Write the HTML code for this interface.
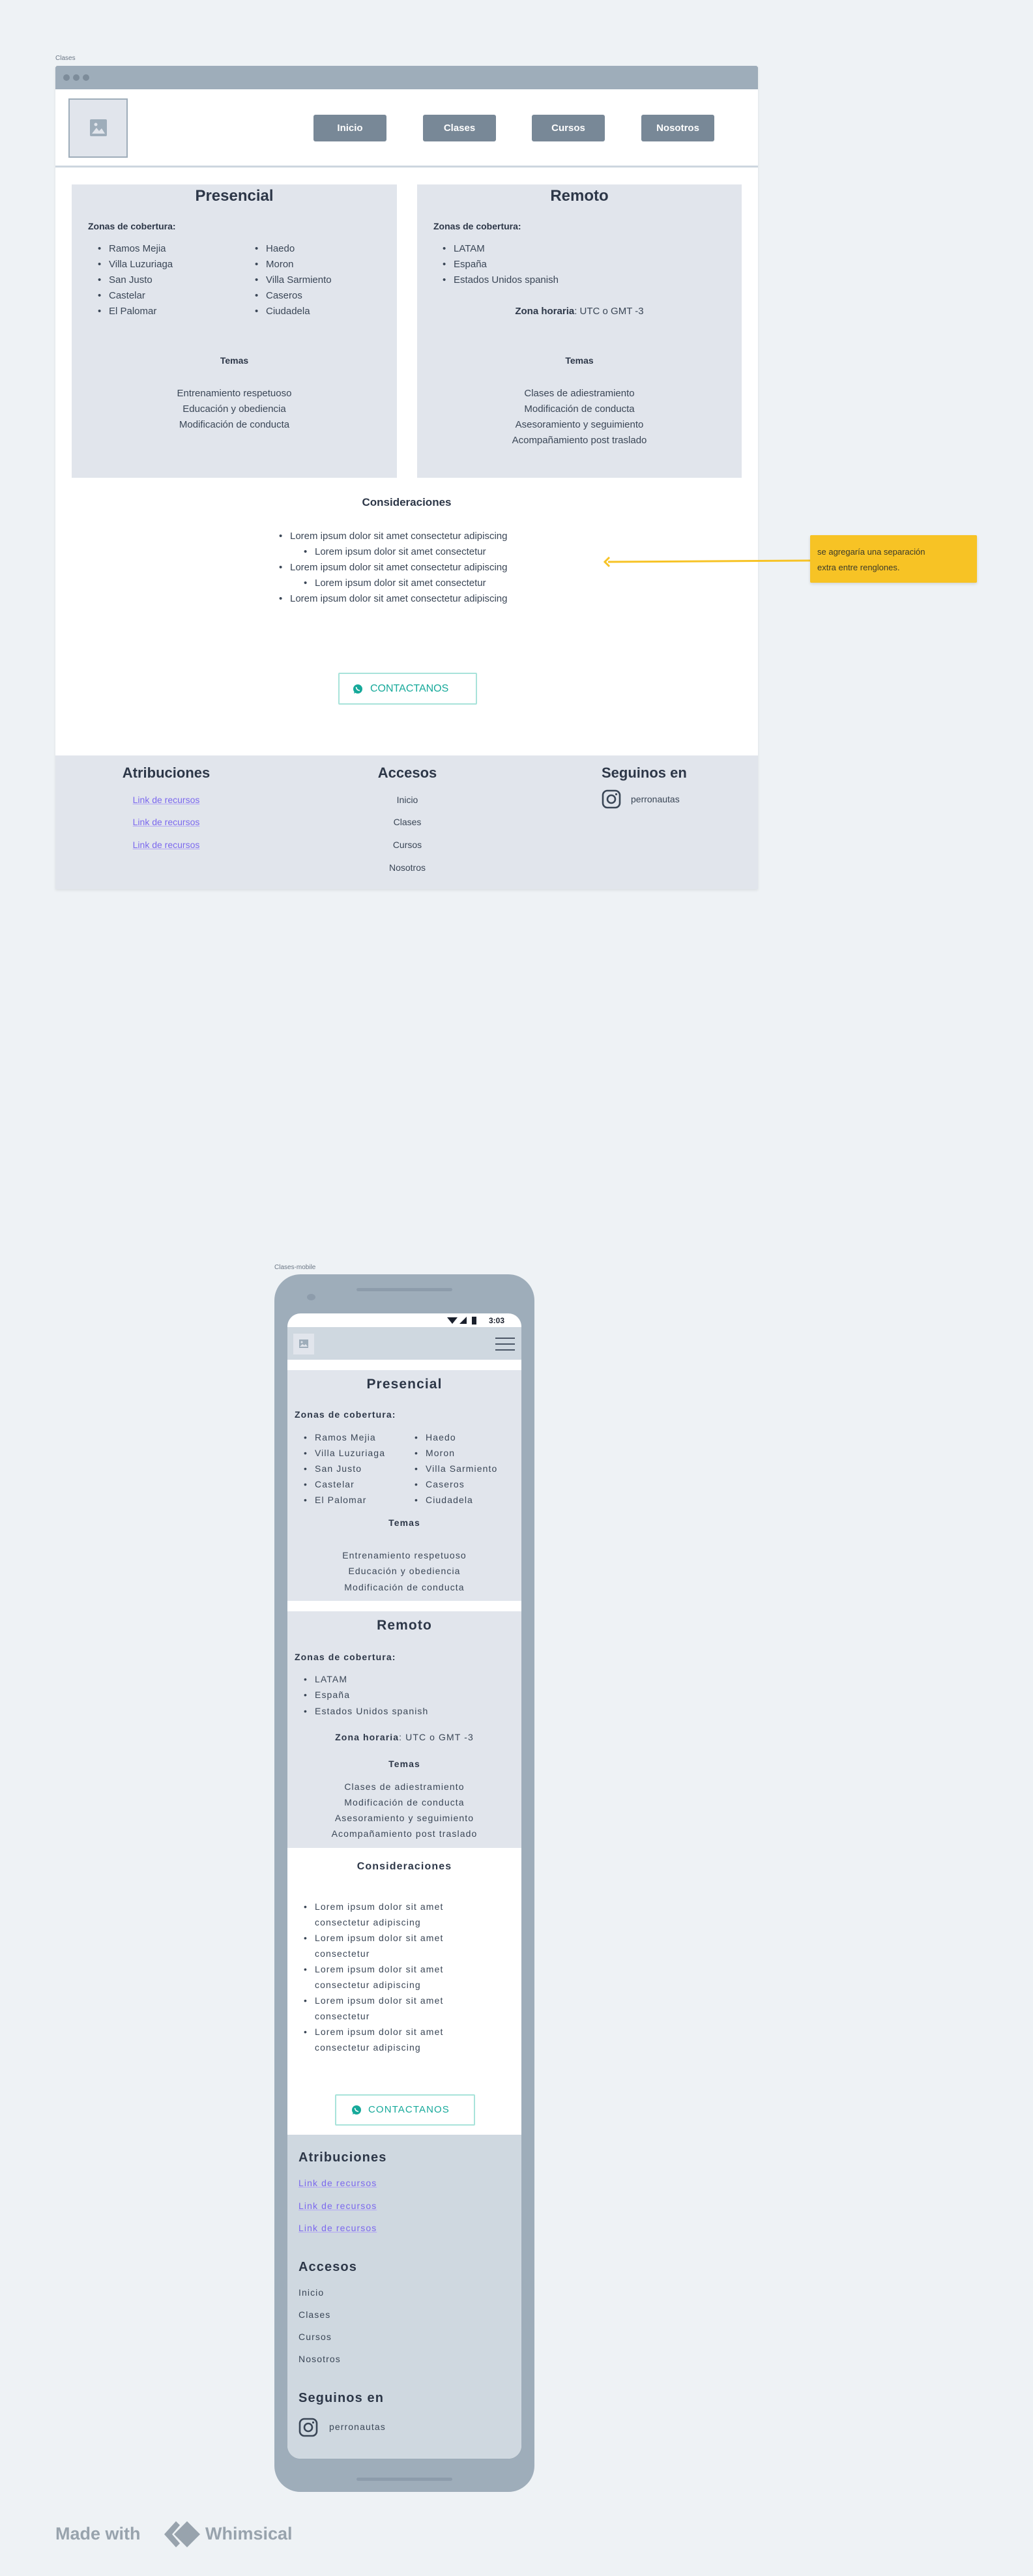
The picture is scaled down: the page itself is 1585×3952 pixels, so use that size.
<!DOCTYPE html>
<html><head><meta charset="utf-8">
<style>
*{margin:0;padding:0;box-sizing:border-box}
body{width:1585px;height:3952px;background:#eef2f5;position:relative;overflow:hidden;font-family:"Liberation Sans",sans-serif;color:#2d3748}
.a{position:absolute}
.t{position:absolute;line-height:24px;white-space:nowrap;font-size:15px;color:#3a4656}
.m{letter-spacing:1.1px}
.c{text-align:center}
.b{font-weight:bold;color:#2d3748}
.btn{position:absolute;background:#788897;color:#fff;font-weight:bold;font-size:15px;text-align:center;line-height:41px;border-radius:3px;width:112px;height:41px;top:176px}
.dot{position:absolute;width:10px;height:10px;border-radius:50%;background:#7d8c9a;top:114px}
.link{color:#7b68ee;text-decoration:underline;text-decoration-color:#b3a7f5}
.bul::before{content:"•";position:absolute;margin-left:-17px}
</style></head><body>

<!-- DESKTOP -->
<div class="t" style="left:85px;top:84px;font-size:10px;line-height:12px;color:#6b7785">Clases</div>
<div class="a" style="left:85px;top:101px;width:1078px;height:1263px;background:#fff;box-shadow:0 2px 4px rgba(0,0,0,.08)"></div>
<div class="a" style="left:85px;top:101px;width:1078px;height:36px;background:#9eadba;border-radius:3px 3px 0 0"></div>
<div class="dot" style="left:97px"></div><div class="dot" style="left:112px"></div><div class="dot" style="left:127px"></div>
<div class="a" style="left:85px;top:254px;width:1078px;height:3px;background:#cdd6df"></div>
<div class="a" style="left:105px;top:151px;width:91px;height:91px;background:#e1e5ec;border:2px solid #9eadba"></div>
<svg class="a" style="left:138px;top:183px" width="26" height="26" viewBox="0 0 26 26"><rect width="26" height="26" rx="2" fill="#9eadba"/><circle cx="9" cy="8" r="2.5" fill="#e1e5ec"/><path d="M3 22 L10 13 L14 18 L18 14 L23 22Z" fill="#e1e5ec"/></svg>
<div class="btn" style="left:481px">Inicio</div>
<div class="btn" style="left:649px">Clases</div>
<div class="btn" style="left:816px">Cursos</div>
<div class="btn" style="left:984px">Nosotros</div>

<div class="a" style="left:110px;top:283px;width:499px;height:450px;background:#e1e5ec"></div>
<div class="a" style="left:640px;top:283px;width:498px;height:450px;background:#e1e5ec"></div>

<div class="t c b" style="left:110px;width:499px;top:286px;font-size:24px;line-height:30px">Presencial</div>
<div class="t b" style="left:135px;top:335px;font-size:14px">Zonas de cobertura:</div>
<div class="t bul" style="left:167px;top:370px">Ramos Mejia</div>
<div class="t bul" style="left:167px;top:394px">Villa Luzuriaga</div>
<div class="t bul" style="left:167px;top:418px">San Justo</div>
<div class="t bul" style="left:167px;top:442px">Castelar</div>
<div class="t bul" style="left:167px;top:466px">El Palomar</div>
<div class="t bul" style="left:408px;top:370px">Haedo</div>
<div class="t bul" style="left:408px;top:394px">Moron</div>
<div class="t bul" style="left:408px;top:418px">Villa Sarmiento</div>
<div class="t bul" style="left:408px;top:442px">Caseros</div>
<div class="t bul" style="left:408px;top:466px">Ciudadela</div>
<div class="t c b" style="left:110px;width:499px;top:541px;font-size:14px">Temas</div>
<div class="t c" style="left:110px;width:499px;top:592px">Entrenamiento respetuoso</div>
<div class="t c" style="left:110px;width:499px;top:616px">Educación y obediencia</div>
<div class="t c" style="left:110px;width:499px;top:640px">Modificación de conducta</div>

<div class="t c b" style="left:640px;width:498px;top:286px;font-size:24px;line-height:30px">Remoto</div>
<div class="t b" style="left:665px;top:335px;font-size:14px">Zonas de cobertura:</div>
<div class="t bul" style="left:696px;top:370px">LATAM</div>
<div class="t bul" style="left:696px;top:394px">España</div>
<div class="t bul" style="left:696px;top:418px">Estados Unidos spanish</div>
<div class="t c" style="left:640px;width:498px;top:466px"><b style="color:#2d3748">Zona horaria</b>: UTC o GMT -3</div>
<div class="t c b" style="left:640px;width:498px;top:541px;font-size:14px">Temas</div>
<div class="t c" style="left:640px;width:498px;top:592px">Clases de adiestramiento</div>
<div class="t c" style="left:640px;width:498px;top:616px">Modificación de conducta</div>
<div class="t c" style="left:640px;width:498px;top:640px">Asesoramiento y seguimiento</div>
<div class="t c" style="left:640px;width:498px;top:664px">Acompañamiento post traslado</div>

<div class="t c b" style="left:85px;width:1078px;top:759px;font-size:17px">Consideraciones</div>
<div class="t bul" style="left:445px;top:811px">Lorem ipsum dolor sit amet consectetur adipiscing</div>
<div class="t bul" style="left:483px;top:835px">Lorem ipsum dolor sit amet consectetur</div>
<div class="t bul" style="left:445px;top:859px">Lorem ipsum dolor sit amet consectetur adipiscing</div>
<div class="t bul" style="left:483px;top:883px">Lorem ipsum dolor sit amet consectetur</div>
<div class="t bul" style="left:445px;top:907px">Lorem ipsum dolor sit amet consectetur adipiscing</div>

<svg class="a" style="left:925px;top:850px" width="320" height="24"><line x1="8" y1="12" x2="318" y2="10" stroke="#f7c325" stroke-width="3"/><path d="M10 5 L3 12 L10 19" fill="none" stroke="#f7c325" stroke-width="3"/></svg>
<div class="a" style="left:1243px;top:821px;width:256px;height:73px;background:#f7c325;border-radius:2px;box-shadow:0 2px 4px rgba(0,0,0,.12)"></div>
<div class="t" style="left:1254px;top:835px;font-size:13px;color:#3a3a2a">se agregaría una separación</div>
<div class="t" style="left:1254px;top:859px;font-size:13px;color:#3a3a2a">extra entre renglones.</div>

<div class="a" style="left:519px;top:1032px;width:213px;height:49px;border:2px solid #a8e3da;border-radius:2px"></div>
<svg class="a" style="left:541px;top:1049px" width="16" height="16" viewBox="0 0 16 16"><circle cx="8" cy="8" r="7" fill="#16a99a"/><path d="M2 15 L3 11 L6 13Z" fill="#16a99a"/><path d="M5.5 5 Q6 10 11 10.5" stroke="#fff" stroke-width="1.6" fill="none"/></svg>
<div class="t" style="left:568px;top:1045px;color:#16a99a;font-size:16px">CONTACTANOS</div>

<div class="a" style="left:85px;top:1159px;width:1078px;height:205px;background:#e1e5ec"></div>
<div class="t c b" style="left:130px;width:250px;top:1172px;font-size:22px;line-height:28px">Atribuciones</div>
<div class="t c b" style="left:500px;width:250px;top:1172px;font-size:22px;line-height:28px">Accesos</div>
<div class="t b" style="left:923px;top:1172px;font-size:22px;line-height:28px">Seguinos en</div>
<div class="t c link" style="left:130px;width:250px;top:1215px;font-size:14px">Link de recursos</div>
<div class="t c link" style="left:130px;width:250px;top:1249px;font-size:14px">Link de recursos</div>
<div class="t c link" style="left:130px;width:250px;top:1284px;font-size:14px">Link de recursos</div>
<div class="t c" style="left:500px;width:250px;top:1215px;font-size:14px">Inicio</div>
<div class="t c" style="left:500px;width:250px;top:1249px;font-size:14px">Clases</div>
<div class="t c" style="left:500px;width:250px;top:1284px;font-size:14px">Cursos</div>
<div class="t c" style="left:500px;width:250px;top:1319px;font-size:14px">Nosotros</div>
<svg class="a" style="left:923px;top:1211px" width="30" height="30" viewBox="0 0 30 30"><rect x="2" y="2" width="26" height="26" rx="7" fill="none" stroke="#3a4656" stroke-width="2.6"/><circle cx="15" cy="15" r="6" fill="none" stroke="#3a4656" stroke-width="2.6"/><circle cx="22.5" cy="7.5" r="1.6" fill="#3a4656"/></svg>
<div class="t" style="left:968px;top:1214px;font-size:14px">perronautas</div>

<!-- MOBILE -->
<div class="t" style="left:421px;top:1938px;font-size:10px;line-height:14px;color:#6b7785">Clases-mobile</div>
<div class="a" style="left:421px;top:1955px;width:399px;height:1868px;background:#9eadba;border-radius:40px"></div>
<div class="a" style="left:547px;top:1976px;width:147px;height:5px;background:#8d9cab;border-radius:3px"></div>
<div class="a" style="left:471px;top:1985px;width:13px;height:10px;background:#8d9cab;border-radius:50%"></div>
<div class="a" style="left:547px;top:3801px;width:147px;height:5px;background:#8d9cab;border-radius:3px"></div>
<div class="a" style="left:441px;top:2015px;width:359px;height:1757px;background:#fff;border-radius:20px 20px 20px 20px;overflow:hidden">
  <div class="a" style="left:0;top:21px;width:359px;height:50px;background:#cfd8e0"></div>
  <div class="a" style="left:0;top:87px;width:359px;height:354px;background:#e1e5ec"></div>
  <div class="a" style="left:0;top:457px;width:359px;height:363px;background:#e1e5ec"></div>
  <div class="a" style="left:0;top:1260px;width:359px;height:497px;background:#cfd8e0"></div>
</div>
<svg class="a" style="left:685px;top:2019px" width="60" height="14"><path d="M1 2 L17 2 L9 12Z" fill="#1a202c"/><path d="M20 12 L31 1 L31 12Z" fill="#1a202c"/><rect x="39" y="1" width="7" height="12" fill="#1a202c"/></svg>
<div class="t b" style="left:750px;top:2014px;font-size:12px;color:#1a202c">3:03</div>
<div class="a" style="left:450px;top:2046px;width:32px;height:32px;background:#e1e5ec"></div>
<svg class="a" style="left:459px;top:2055px" width="14" height="13"><rect width="14" height="13" fill="#9eadba"/><circle cx="4" cy="4" r="1.5" fill="#e1e5ec"/><path d="M1 11 L5 7 L8 9 L10 7 L13 11Z" fill="#e1e5ec"/></svg>
<div class="a" style="left:760px;top:2052px;width:30px;height:2px;background:#4a5565"></div>
<div class="a" style="left:760px;top:2061px;width:30px;height:2px;background:#4a5565"></div>
<div class="a" style="left:760px;top:2070px;width:30px;height:2px;background:#4a5565"></div>

<div class="t c b m" style="left:441px;width:359px;top:2110px;font-size:21px;line-height:28px">Presencial</div>
<div class="t b m" style="left:452px;top:2158px;font-size:14px">Zonas de cobertura:</div>
<div class="t bul m" style="left:483px;top:2193px;font-size:14px">Ramos Mejia</div>
<div class="t bul m" style="left:483px;top:2217px;font-size:14px">Villa Luzuriaga</div>
<div class="t bul m" style="left:483px;top:2241px;font-size:14px">San Justo</div>
<div class="t bul m" style="left:483px;top:2265px;font-size:14px">Castelar</div>
<div class="t bul m" style="left:483px;top:2289px;font-size:14px">El Palomar</div>
<div class="t bul m" style="left:653px;top:2193px;font-size:14px">Haedo</div>
<div class="t bul m" style="left:653px;top:2217px;font-size:14px">Moron</div>
<div class="t bul m" style="left:653px;top:2241px;font-size:14px">Villa Sarmiento</div>
<div class="t bul m" style="left:653px;top:2265px;font-size:14px">Caseros</div>
<div class="t bul m" style="left:653px;top:2289px;font-size:14px">Ciudadela</div>
<div class="t c b m" style="left:441px;width:359px;top:2324px;font-size:14px">Temas</div>
<div class="t c m" style="left:441px;width:359px;top:2374px;font-size:14px">Entrenamiento respetuoso</div>
<div class="t c m" style="left:441px;width:359px;top:2398px;font-size:14px">Educación y obediencia</div>
<div class="t c m" style="left:441px;width:359px;top:2423px;font-size:14px">Modificación de conducta</div>

<div class="t c b m" style="left:441px;width:359px;top:2480px;font-size:21px;line-height:28px">Remoto</div>
<div class="t b m" style="left:452px;top:2530px;font-size:14px">Zonas de cobertura:</div>
<div class="t bul m" style="left:483px;top:2564px;font-size:14px">LATAM</div>
<div class="t bul m" style="left:483px;top:2588px;font-size:14px">España</div>
<div class="t bul m" style="left:483px;top:2613px;font-size:14px">Estados Unidos spanish</div>
<div class="t c m" style="left:441px;width:359px;top:2653px;font-size:14px"><b style="color:#2d3748">Zona horaria</b>: UTC o GMT -3</div>
<div class="t c b m" style="left:441px;width:359px;top:2694px;font-size:14px">Temas</div>
<div class="t c m" style="left:441px;width:359px;top:2729px;font-size:14px">Clases de adiestramiento</div>
<div class="t c m" style="left:441px;width:359px;top:2753px;font-size:14px">Modificación de conducta</div>
<div class="t c m" style="left:441px;width:359px;top:2777px;font-size:14px">Asesoramiento y seguimiento</div>
<div class="t c m" style="left:441px;width:359px;top:2801px;font-size:14px">Acompañamiento post traslado</div>

<div class="t c b m" style="left:441px;width:359px;top:2852px;font-size:16px">Consideraciones</div>
<div class="t bul m" style="left:483px;top:2913px;font-size:14px">Lorem ipsum dolor sit amet</div>
<div class="t m" style="left:483px;top:2937px;font-size:14px">consectetur adipiscing</div>
<div class="t bul m" style="left:483px;top:2961px;font-size:14px">Lorem ipsum dolor sit amet</div>
<div class="t m" style="left:483px;top:2985px;font-size:14px">consectetur</div>
<div class="t bul m" style="left:483px;top:3009px;font-size:14px">Lorem ipsum dolor sit amet</div>
<div class="t m" style="left:483px;top:3033px;font-size:14px">consectetur adipiscing</div>
<div class="t bul m" style="left:483px;top:3057px;font-size:14px">Lorem ipsum dolor sit amet</div>
<div class="t m" style="left:483px;top:3081px;font-size:14px">consectetur</div>
<div class="t bul m" style="left:483px;top:3105px;font-size:14px">Lorem ipsum dolor sit amet</div>
<div class="t m" style="left:483px;top:3129px;font-size:14px">consectetur adipiscing</div>

<div class="a" style="left:514px;top:3213px;width:215px;height:48px;border:2px solid #a8e3da;border-radius:2px"></div>
<svg class="a" style="left:539px;top:3229px" width="16" height="16" viewBox="0 0 16 16"><circle cx="8" cy="8" r="7" fill="#16a99a"/><path d="M2 15 L3 11 L6 13Z" fill="#16a99a"/><path d="M5.5 5 Q6 10 11 10.5" stroke="#fff" stroke-width="1.6" fill="none"/></svg>
<div class="t m" style="left:565px;top:3225px;color:#16a99a;font-size:15px">CONTACTANOS</div>

<div class="t b m" style="left:458px;top:3296px;font-size:20px;line-height:28px">Atribuciones</div>
<div class="t link m" style="left:458px;top:3337px;font-size:14px">Link de recursos</div>
<div class="t link m" style="left:458px;top:3372px;font-size:14px">Link de recursos</div>
<div class="t link m" style="left:458px;top:3406px;font-size:14px">Link de recursos</div>
<div class="t b m" style="left:458px;top:3464px;font-size:20px;line-height:28px">Accesos</div>
<div class="t m" style="left:458px;top:3505px;font-size:14px">Inicio</div>
<div class="t m" style="left:458px;top:3539px;font-size:14px">Clases</div>
<div class="t m" style="left:458px;top:3573px;font-size:14px">Cursos</div>
<div class="t m" style="left:458px;top:3607px;font-size:14px">Nosotros</div>
<div class="t b m" style="left:458px;top:3665px;font-size:20px;line-height:28px">Seguinos en</div>
<svg class="a" style="left:458px;top:3709px" width="30" height="30" viewBox="0 0 30 30"><rect x="2" y="2" width="26" height="26" rx="7" fill="none" stroke="#3a4656" stroke-width="2.6"/><circle cx="15" cy="15" r="6" fill="none" stroke="#3a4656" stroke-width="2.6"/><circle cx="22.5" cy="7.5" r="1.6" fill="#3a4656"/></svg>
<div class="t m" style="left:505px;top:3711px;font-size:14px">perronautas</div>

<!-- Made with Whimsical -->
<div class="t b" style="left:85px;top:3870px;font-size:27px;line-height:34px;color:#98a3ad">Made with</div>
<svg class="a" style="left:250px;top:3866px" width="60" height="44" viewBox="0 0 60 44"><path d="M20 2 L2 22 L20 42 L26 36 L14 22 L26 8Z" fill="#98a3ad"/><path d="M37 2 L57 22 L37 42 L17 22Z" fill="#98a3ad"/></svg>
<div class="t b" style="left:315px;top:3870px;font-size:27px;line-height:34px;color:#98a3ad">Whimsical</div>
</body></html>
